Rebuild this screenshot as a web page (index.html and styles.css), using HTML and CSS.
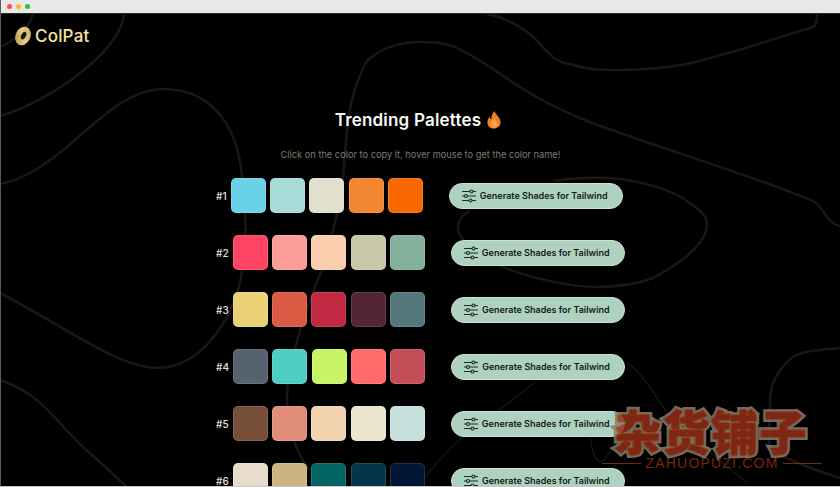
FILE: index.html
```html
<!DOCTYPE html>
<html lang="en">
<head>
<meta charset="UTF-8">
<meta name="viewport" content="width=device-width, initial-scale=1.0">
<title>ColPat - Trending Palettes</title>
<link rel="stylesheet" href="styles.css">
</head>
<body>
<div class="window">
  <div class="titlebar">
    <span class="dot dotRed"></span>
    <span class="dot dotYellow"></span>
    <span class="dot dotGreen"></span>
  </div>

  <div class="page">
    <!-- Background contour lines -->
    <svg class="contours" viewBox="0 14 840 473" fill="none">
      <path d="M0 47C14 41 28 30 33 14"/>
      <path d="M0 116C50 102 122 50 124 14"/>
      <path d="M0 184C30 178 50 160 67 147C100 118 130 89 163 89C215 89 238 130 242 177C245 205 248 240 242 270C238 310 205 368 157 368C120 368 70 330 0 293"/>
      <path d="M0 380C12 384 22 389 33 397C50 410 65 430 83 447C100 462 115 476 127 487"/>
      <path d="M310 470C296 455 287 425 287 395C287 375 300 320 322 270C330 250 340 200 343 177C347 140 345 100 367 61C380 48 400 42 420 42C440 42 450 44 463 51C490 65 505 78 520 87C540 100 565 112 587 121C650 145 760 178 813 201C825 208 825 222 840 226"/>
      <path d="M487 14C505 17 518 25 530 34C545 48 552 62 570 64C590 70 600 70 620 70C645 70 665 68 687 64C730 54 770 40 813 27C817 25 817 20 817 14"/>
      <path d="M553 181C575 178 600 177 620 179C650 183 675 192 687 201C700 210 707 216 707 224C707 240 690 258 653 278C635 285 615 287 597 287C570 287 530 278 503 267C485 258 465 248 463 239C455 230 456 218 470 211"/>
      <path d="M840 348C820 350 805 350 793 357C778 368 770 385 770 400C770 425 768 440 770 447C775 455 800 465 840 478"/>
      <path class="thin" d="M627 363C640 370 655 395 667 413C680 430 695 440 707 450C722 462 735 473 747 483"/>
      <path class="thin" d="M535 382C525 390 515 398 503 407C490 418 475 428 463 437C450 447 435 465 425 477"/>
      <path class="thin" d="M590 438C592 450 594 458 600 462C606 460 610 452 612 447"/>
    </svg>

    <header class="brand">
      <svg class="brandLogo" viewBox="0 0 18 20">
        <defs>
          <linearGradient id="gold" x1="0" y1="1" x2="1" y2="0">
            <stop offset="0" stop-color="#a88a45"/>
            <stop offset="0.5" stop-color="#e6cf85"/>
            <stop offset="1" stop-color="#c9aa5c"/>
          </linearGradient>
        </defs>
        <ellipse cx="9" cy="10" rx="7.400" ry="9.600" transform="rotate(26 9 10)" fill="url(#gold)"/>
        <ellipse cx="9.600" cy="9.600" rx="2.300" ry="4" transform="rotate(28 9.600 9.600)" fill="#1c1608"/>
      </svg>
      <span class="brandName">ColPat</span>
    </header>

    <main class="content">
      <h1 class="title">
        Trending Palettes
        <svg class="flame" viewBox="0 0 14 18">
          <path d="M7.400 0C8 3 13.600 6.400 13.600 11.300C13.600 15.200 10.700 17.600 7 17.600C3.300 17.600 .4 15.200 .4 11.400C.4 9 1.600 7 2.800 5.800C3 7.200 3.500 8 4.400 8.400C4.200 5 5.400 2 7.400 0Z" fill="#f47b20"/>
          <path d="M7.200 7C7.600 9 10.600 10.800 10.600 13.200C10.600 15.400 9 16.800 7 16.800C5 16.800 3.400 15.400 3.400 13.200C3.400 10.800 6.200 9.600 7.200 7Z" fill="#f9a04f"/>
        </svg>
      </h1>
      <p class="hint">Click on the color to copy it, hover mouse to get the color name!</p>

      <div class="palettes">
        <div class="paletteRow">
          <span class="rank">#1</span>
          <div class="swatches">
            <div class="swatch" style="background-color:#69d2e7"></div>
            <div class="swatch" style="background-color:#a7dbd8"></div>
            <div class="swatch" style="background-color:#e0e0cc"></div>
            <div class="swatch" style="background-color:#f38630"></div>
            <div class="swatch" style="background-color:#fa6900"></div>
          </div>
          <button class="shadesButton" type="button">
            <svg class="sliders" viewBox="0 0 14 14"><path d="M0 2.500H8M11 2.500H14M0 7H2.500M5.500 7H14M0 11.500H7M10 11.500H14"/><circle cx="9.500" cy="2.500" r="1.500"/><circle cx="4" cy="7" r="1.500"/><circle cx="8.500" cy="11.500" r="1.500"/></svg>
            Generate Shades for Tailwind
          </button>
        </div>

        <div class="paletteRow">
          <span class="rank">#2</span>
          <div class="swatches">
            <div class="swatch" style="background-color:#fe4365"></div>
            <div class="swatch" style="background-color:#fc9d9a"></div>
            <div class="swatch" style="background-color:#f9cdad"></div>
            <div class="swatch" style="background-color:#c8c8a9"></div>
            <div class="swatch" style="background-color:#83af9b"></div>
          </div>
          <button class="shadesButton" type="button">
            <svg class="sliders" viewBox="0 0 14 14"><path d="M0 2.500H8M11 2.500H14M0 7H2.500M5.500 7H14M0 11.500H7M10 11.500H14"/><circle cx="9.500" cy="2.500" r="1.500"/><circle cx="4" cy="7" r="1.500"/><circle cx="8.500" cy="11.500" r="1.500"/></svg>
            Generate Shades for Tailwind
          </button>
        </div>

        <div class="paletteRow">
          <span class="rank">#3</span>
          <div class="swatches">
            <div class="swatch" style="background-color:#ecd078"></div>
            <div class="swatch" style="background-color:#d95b43"></div>
            <div class="swatch" style="background-color:#c02942"></div>
            <div class="swatch" style="background-color:#542437"></div>
            <div class="swatch" style="background-color:#53777a"></div>
          </div>
          <button class="shadesButton" type="button">
            <svg class="sliders" viewBox="0 0 14 14"><path d="M0 2.500H8M11 2.500H14M0 7H2.500M5.500 7H14M0 11.500H7M10 11.500H14"/><circle cx="9.500" cy="2.500" r="1.500"/><circle cx="4" cy="7" r="1.500"/><circle cx="8.500" cy="11.500" r="1.500"/></svg>
            Generate Shades for Tailwind
          </button>
        </div>

        <div class="paletteRow">
          <span class="rank">#4</span>
          <div class="swatches">
            <div class="swatch" style="background-color:#556270"></div>
            <div class="swatch" style="background-color:#4ecdc4"></div>
            <div class="swatch" style="background-color:#c7f464"></div>
            <div class="swatch" style="background-color:#ff6b6b"></div>
            <div class="swatch" style="background-color:#c44d58"></div>
          </div>
          <button class="shadesButton" type="button">
            <svg class="sliders" viewBox="0 0 14 14"><path d="M0 2.500H8M11 2.500H14M0 7H2.500M5.500 7H14M0 11.500H7M10 11.500H14"/><circle cx="9.500" cy="2.500" r="1.500"/><circle cx="4" cy="7" r="1.500"/><circle cx="8.500" cy="11.500" r="1.500"/></svg>
            Generate Shades for Tailwind
          </button>
        </div>

        <div class="paletteRow">
          <span class="rank">#5</span>
          <div class="swatches">
            <div class="swatch" style="background-color:#774f38"></div>
            <div class="swatch" style="background-color:#e08e79"></div>
            <div class="swatch" style="background-color:#f1d4af"></div>
            <div class="swatch" style="background-color:#ece5ce"></div>
            <div class="swatch" style="background-color:#c5e0dc"></div>
          </div>
          <button class="shadesButton" type="button">
            <svg class="sliders" viewBox="0 0 14 14"><path d="M0 2.500H8M11 2.500H14M0 7H2.500M5.500 7H14M0 11.500H7M10 11.500H14"/><circle cx="9.500" cy="2.500" r="1.500"/><circle cx="4" cy="7" r="1.500"/><circle cx="8.500" cy="11.500" r="1.500"/></svg>
            Generate Shades for Tailwind
          </button>
        </div>

        <div class="paletteRow">
          <span class="rank">#6</span>
          <div class="swatches">
            <div class="swatch" style="background-color:#e8ddcb"></div>
            <div class="swatch" style="background-color:#cdb380"></div>
            <div class="swatch" style="background-color:#036564"></div>
            <div class="swatch" style="background-color:#033649"></div>
            <div class="swatch" style="background-color:#031634"></div>
          </div>
          <button class="shadesButton" type="button">
            <svg class="sliders" viewBox="0 0 14 14"><path d="M0 2.500H8M11 2.500H14M0 7H2.500M5.500 7H14M0 11.500H7M10 11.500H14"/><circle cx="9.500" cy="2.500" r="1.500"/><circle cx="4" cy="7" r="1.500"/><circle cx="8.500" cy="11.500" r="1.500"/></svg>
            Generate Shades for Tailwind
          </button>
        </div>
      </div>
    </main>

    <!-- Watermark over the page -->
    <div class="watermark">
      <div class="watermarkName">杂货铺子</div>
      <div class="watermarkUrl">ZAHUOPUZI.COM</div>
    </div>
  </div>
</div>
</body>
</html>
```

FILE: styles.css
```css
html, body {
  margin: 0;
  padding: 0;
  background-color: #000;
}

.window {
  width: 840px;
  height: 487px;
  display: flex;
  flex-direction: column;
  overflow: hidden;
  box-sizing: border-box;
  border-left: 1px solid #5a5a5a;
  border-bottom: 1px solid #c8c8c8;
  font-family: "Inter", "Liberation Sans", sans-serif;
}

.titlebar {
  flex: none;
  height: 13px;
  margin-left: -1px;
  padding-left: 7px;
  display: flex;
  align-items: center;
  gap: 4px;
  background-color: #e8e8e8;
  border-bottom: 1px solid #2a2a2a;
}

.dot {
  width: 5px;
  height: 5px;
  border-radius: 50%;
}
.dotRed { background-color: #fb4e4c; }
.dotYellow { background-color: #fdb428; }
.dotGreen { background-color: #27c43f; }

.page {
  position: relative;
  flex: 1;
  min-height: 0;
  background-color: #000;
}

.contours {
  position: absolute;
  top: 0;
  left: -1px;
  width: 840px;
  height: 473px;
}
.contours path {
  stroke: #181818;
  stroke-width: 2.5;
}
.contours path.thin {
  stroke: #151515;
  stroke-width: 1.5;
}

.brand {
  position: relative;
  display: flex;
  align-items: center;
  gap: 3px;
  padding: 12px 0 0 13px;
  height: 20px;
}
.brandLogo {
  width: 18px;
  height: 20px;
}
.brandName {
  font-size: 17px;
  font-weight: 500;
  letter-spacing: 0.2px;
  color: #f6e39a;
}

.content {
  position: relative;
  display: flex;
  flex-direction: column;
  align-items: center;
}

.title {
  display: flex;
  align-items: center;
  gap: 6px;
  margin: 63px 5px 0 0;
  height: 22px;
  font-size: 17px;
  font-weight: 600;
  letter-spacing: 0.2px;
  color: #fbfaf5;
}
.flame {
  width: 14px;
  height: 18px;
}

.hint {
  margin: 17px 0 0 0;
  font-size: 9.250px;
  line-height: 14px;
  color: #7f7b6e;
}

.palettes {
  display: flex;
  flex-direction: column;
  gap: 22px;
  margin-top: 16px;
}

.paletteRow {
  display: flex;
  align-items: center;
}

.rank {
  margin-right: 4px;
  font-size: 10px;
  font-weight: 500;
  color: #e4e4e4;
}

.swatches {
  display: flex;
  gap: 4.300px;
  margin-right: 26px;
}
.swatch {
  width: 35px;
  height: 35px;
  box-sizing: border-box;
  border: 1px solid rgba(255, 255, 255, 0.12);
  border-radius: 5px;
}

.shadesButton {
  display: flex;
  align-items: center;
  gap: 4px;
  height: 26px;
  padding: 0 14px 0 12px;
  box-sizing: border-box;
  border: 1px solid #c9e3d5;
  border-radius: 13px;
  background-color: #aed2bf;
  font-family: inherit;
  font-size: 9px;
  font-weight: 600;
  color: #101a15;
  white-space: nowrap;
}
.sliders {
  flex: none;
  width: 14px;
  height: 14px;
  fill: none;
  stroke: #1b2a22;
  stroke-width: 1.100;
}

.watermark {
  position: absolute;
  top: 394px;
  left: 601px;
  width: 220px;
  display: flex;
  flex-direction: column;
  align-items: center;
  opacity: 0.85;
}
.watermarkName {
  margin-right: 2px;
  font-family: "Noto Sans CJK SC", sans-serif;
  font-size: 47px;
  line-height: 44px;
  font-weight: 900;
  letter-spacing: 1.500px;
  color: #952e1c;
  -webkit-text-stroke: 6px #857e76;
  paint-order: stroke fill;
  text-shadow: 1px 0 0 #a5551c, -1px 0 0 #a5551c, 0 1px 0 #a5551c, 0 -1px 0 #a5551c;
}
.watermarkUrl {
  display: flex;
  align-items: center;
  gap: 4px;
  width: 100%;
  margin-top: 3px;
  font-family: "Liberation Sans", sans-serif;
  font-size: 14px;
  line-height: 16px;
  letter-spacing: 1.200px;
  color: #8e2c14;
}
.watermarkUrl::before, .watermarkUrl::after {
  content: "";
  flex: 1;
  height: 1px;
  background-color: #8e3012;
}
```
